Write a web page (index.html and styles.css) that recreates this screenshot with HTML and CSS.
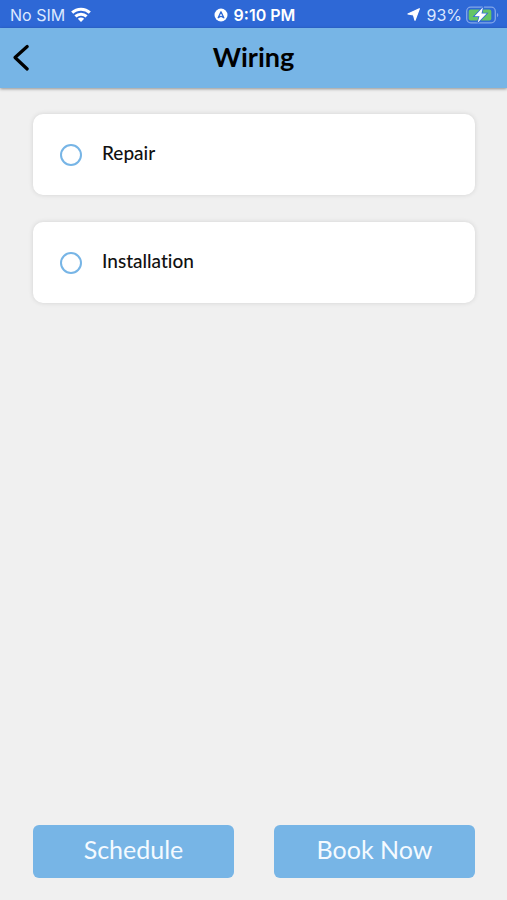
FILE: index.html
```html
<!DOCTYPE html>
<html lang="en">
<head>
<meta charset="utf-8">
<meta name="viewport" content="width=device-width, initial-scale=1">
<title>Wiring</title>
<link rel="stylesheet" href="styles.css">
</head>
<body>
<div class="status">
  <div class="status-left">
    <span>No SIM</span>
    <svg width="20" height="16" viewBox="0 0 20 16" aria-hidden="true"><g fill="none" stroke="currentColor" stroke-width="3"><path d="M1.200 5.600C6 1 14 1 18.800 5.600"/><path d="M4.400 9.300C7.600 6.400 12.400 6.400 15.600 9.300"/></g><path d="M10 15l-3.200-3.200q3.200-2.500 6.400 0z" fill="currentColor"/></svg>
  </div>
  <div class="status-time">
    <svg width="14" height="14" viewBox="0 0 14 14" aria-hidden="true"><circle cx="7" cy="7" r="6.500" fill="currentColor"/><path d="M4.200 9.800L7 3.800l2.800 6L7 8.200z" fill="none" stroke="#2e68d6" stroke-width="1.300" stroke-linejoin="round"/></svg>
    <span>9:10 PM</span>
  </div>
  <div class="status-right">
    <svg width="13" height="13" viewBox="0 0 13 13" aria-hidden="true"><path d="M12.300.700L8 12.300 6.500 7 .900 6z" fill="currentColor" stroke="currentColor" stroke-width="1.200" stroke-linejoin="round"/></svg>
    <span class="percent">93%</span>
    <svg class="battery" width="33" height="18" viewBox="0 0 33 18" aria-hidden="true"><rect x=".700" y="1.200" width="28.600" height="15.600" rx="4" fill="none" stroke="#83a6e9" stroke-width="1.300"/><path d="M31 6.700q2.600 2.300 0 4.600z" fill="#83a6e9"/><rect x="2.700" y="3.400" width="22.600" height="11.200" rx="2" fill="#65c466"/><path d="M17 1.200L8.500 10.200h5L11.500 17l9.200-9.500h-5.200z" fill="#fff" stroke="#2e68d6" stroke-width="1.600" paint-order="stroke"/></svg>
  </div>
</div>
<header class="header">
  <button class="back" type="button" aria-label="Back"><svg width="18" height="28" viewBox="0 0 18 28" aria-hidden="true"><path d="M15.200 2.500L3 13.500l12.200 11.500" fill="none" stroke="currentColor" stroke-width="3.200" stroke-linecap="round" stroke-linejoin="round"/></svg></button>
  <h1>Wiring</h1>
</header>
<main class="options">
  <label class="card"><input type="radio" name="service" value="repair"><span>Repair</span></label>
  <label class="card"><input type="radio" name="service" value="installation"><span>Installation</span></label>
</main>
<footer class="actions">
  <button type="button">Schedule</button>
  <button type="button">Book Now</button>
</footer>
</body>
</html>
```
FILE: styles.css
```css
* { box-sizing: border-box; }

body {
  margin: 0;
  min-height: 100vh;
  display: flex;
  flex-direction: column;
  background: #f0f0f0;
  color: #111;
  font-family: Lato, "Liberation Sans", sans-serif;
  font-variant-ligatures: none;
}

.status {
  display: grid;
  grid-template-columns: 1fr auto 1fr;
  align-items: center;
  height: 28px;
  padding: 1px 8px 0 10px;
  background: #2e68d6;
  color: #fff;
  font: 16px/20px Inter, "Liberation Sans", sans-serif;
}

.status-left,
.status-time,
.status-right {
  display: flex;
  align-items: center;
  gap: 6px;
}

.status-left,
.percent { color: #dce8ff; }

.status svg { flex: none; color: #fff; }

.status-time { font-weight: 600; }

.status-right { justify-content: flex-end; }

.battery { margin-left: -2px; }

.header {
  display: grid;
  grid-template-columns: 48px 1fr 48px;
  align-items: center;
  height: 60px;
  background: #77b5e6;
  box-shadow: 0 1px 3px rgba(0, 0, 0, .4);
}

.back {
  display: flex;
  padding: 0 12px;
  border: 0;
  background: none;
  color: #000;
}

.header h1 {
  margin: 0;
  padding-bottom: 2px;
  color: #000;
  font-size: 27px;
  line-height: 32px;
  font-weight: 700;
  text-align: center;
}

.options {
  flex: 1;
  display: flex;
  flex-direction: column;
  gap: 27px;
  padding: 26px 32px 26px 33px;
}

.card {
  display: flex;
  align-items: center;
  gap: 20px;
  height: 81px;
  padding: 0 27px;
  border-radius: 10px;
  background: #fff;
  box-shadow: 0 0 5px rgba(0, 0, 0, .12);
  font-size: 19px;
  line-height: 24px;
  font-weight: 500;
}

.card span { padding-bottom: 4px; }

.card input {
  appearance: none;
  width: 22px;
  height: 22px;
  margin: 0;
  border: 2px solid #77b5e6;
  border-radius: 50%;
}

.card input:checked {
  background: #77b5e6;
  box-shadow: inset 0 0 0 3px #fff;
}

.actions {
  display: grid;
  grid-template-columns: 1fr 1fr;
  gap: 40px;
  padding: 0 32px 22px 33px;
}

.actions button {
  height: 53px;
  padding: 0 0 5px;
  border: 0;
  border-radius: 6px;
  background: #77b5e6;
  color: #f4faff;
  font: 25px/28px Lato, "Liberation Sans", sans-serif;
}
```
